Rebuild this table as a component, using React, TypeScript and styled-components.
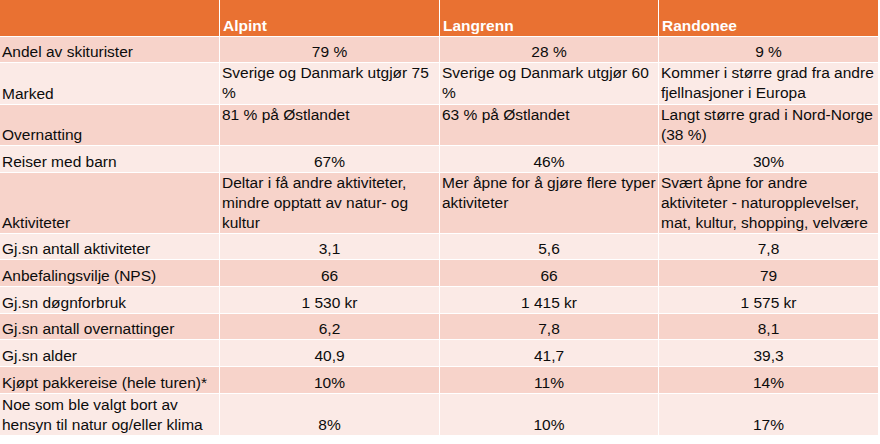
import React, { FC } from 'react';
import styled, { createGlobalStyle } from 'styled-components';

const GlobalStyle = createGlobalStyle`
  html, body {
    margin: 0;
    padding: 0;
    background: #ffffff;
  }
  body {
    font-family: "Liberation Sans", Arial, sans-serif;
  }
`;

const Table = styled.div`
  display: flex;
  flex-direction: column;
  gap: 1px;
  width: 878px;
  background: #ffffff;
`;

const Row = styled.div<{ $height: number }>`
  display: grid;
  grid-template-columns: 219px 219px 218px 219px;
  gap: 1px;
  height: ${(p) => p.$height}px;
`;

const HeadCell = styled.div`
  display: flex;
  flex-direction: column;
  justify-content: flex-end;
  padding: 0 3px;
  background: #e97132;
  color: #ffffff;
  font-size: 15.5px;
  font-weight: 700;
  line-height: 20px;
`;

const LabelCell = styled.div<{ $band: 'dark' | 'light' }>`
  display: flex;
  flex-direction: column;
  justify-content: flex-end;
  padding: 0 2px;
  background: ${(p) => (p.$band === 'dark' ? '#f7d3ca' : '#fbeae6')};
  color: #0c0c0c;
  font-size: 15.5px;
  line-height: 20px;
  white-space: pre-line;
  overflow: hidden;
`;

const DataCell = styled.div<{
  $band: 'dark' | 'light';
  $valign: 'top' | 'bottom';
  $center: boolean;
}>`
  display: flex;
  flex-direction: column;
  justify-content: ${(p) => (p.$valign === 'top' ? 'flex-start' : 'flex-end')};
  padding: 0 2px;
  background: ${(p) => (p.$band === 'dark' ? '#f7d3ca' : '#fbeae6')};
  color: #0c0c0c;
  font-size: 15.5px;
  line-height: 20px;
  text-align: ${(p) => (p.$center ? 'center' : 'left')};
  white-space: pre;
  overflow: hidden;
`;

interface IRow {
  label: string;
  values: string[];
  height: number;
  valign: 'top' | 'bottom';
  center: boolean;
}

const rows: IRow[] = [
  { label: 'Andel av skiturister', values: ['79 %', '28 %', '9 %'], height: 25, valign: 'bottom', center: true },
  {
    label: 'Marked',
    values: ['Sverige og Danmark utgjør 75\n%', 'Sverige og Danmark utgjør 60\n%', 'Kommer i større grad fra andre\nfjellnasjoner i Europa'],
    height: 41,
    valign: 'top',
    center: false,
  },
  {
    label: 'Overnatting',
    values: ['81 % på Østlandet', '63 % på Østlandet', 'Langt større grad i Nord-Norge\n(38 %)'],
    height: 40,
    valign: 'top',
    center: false,
  },
  { label: 'Reiser med barn', values: ['67%', '46%', '30%'], height: 26, valign: 'bottom', center: true },
  {
    label: 'Aktiviteter',
    values: [
      'Deltar i få andre aktiviteter,\nmindre opptatt av natur- og\nkultur',
      'Mer åpne for å gjøre flere typer\naktiviteter',
      'Svært åpne for andre\naktiviteter - naturopplevelser,\nmat, kultur, shopping, velvære',
    ],
    height: 60,
    valign: 'top',
    center: false,
  },
  { label: 'Gj.sn antall aktiviteter', values: ['3,1', '5,6', '7,8'], height: 25, valign: 'bottom', center: true },
  { label: 'Anbefalingsvilje (NPS)', values: ['66', '66', '79'], height: 26, valign: 'bottom', center: true },
  { label: 'Gj.sn døgnforbruk', values: ['1 530 kr', '1 415 kr', '1 575 kr'], height: 26, valign: 'bottom', center: true },
  { label: 'Gj.sn antall overnattinger', values: ['6,2', '7,8', '8,1'], height: 25, valign: 'bottom', center: true },
  { label: 'Gj.sn alder', values: ['40,9', '41,7', '39,3'], height: 26, valign: 'bottom', center: true },
  { label: 'Kjøpt pakkereise (hele turen)*', values: ['10%', '11%', '14%'], height: 26, valign: 'bottom', center: true },
  {
    label: 'Noe som ble valgt bort av\nhensyn til natur og/eller klima',
    values: ['8%', '10%', '17%'],
    height: 41,
    valign: 'bottom',
    center: true,
  },
];

const headers = ['', 'Alpint', 'Langrenn', 'Randonee'];

const App: FC = () => {
  return (
    <>
      <GlobalStyle />
      <Table>
        <Row $height={36}>
          {headers.map((h, i) => (
            <HeadCell key={i}>{h}</HeadCell>
          ))}
        </Row>
        {rows.map((row, i) => {
          const band = i % 2 === 0 ? 'dark' : 'light';
          return (
            <Row key={row.label} $height={row.height}>
              <LabelCell $band={band}>{row.label}</LabelCell>
              {row.values.map((v, j) => (
                <DataCell key={j} $band={band} $valign={row.valign} $center={row.center}>
                  {v}
                </DataCell>
              ))}
            </Row>
          );
        })}
      </Table>
    </>
  );
};

export default App;
